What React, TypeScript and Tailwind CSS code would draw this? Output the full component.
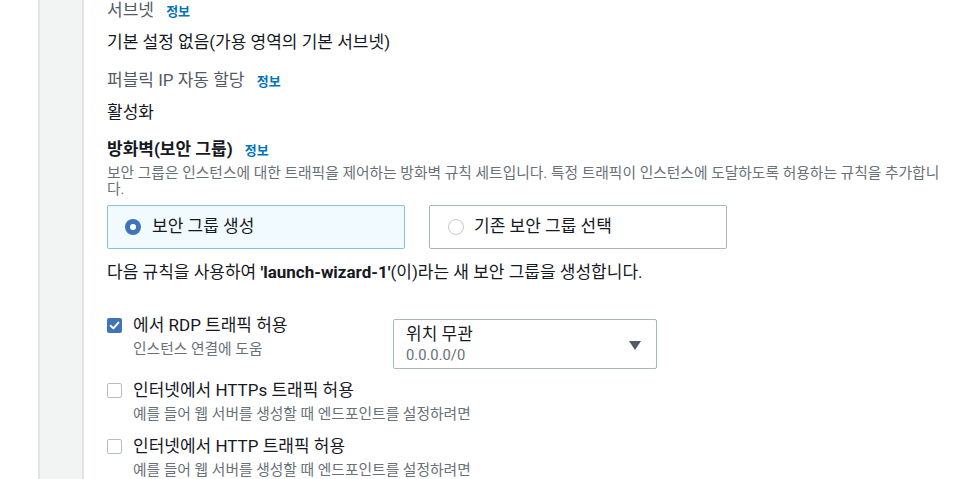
import React from 'react';

const Info = () => (
  <span className="ml-2 text-[13px] font-bold text-[#0073bb]">정보</span>
);

const CheckBox = ({ checked }: { checked?: boolean }) =>
  checked ? (
    <span className="mt-[3px] flex h-[15px] w-[15px] shrink-0 items-center justify-center rounded-[2px] bg-[#3f75b8]">
      <svg width="11" height="11" viewBox="0 0 10 10">
        <path d="M1.5 5.2 L4 7.6 L8.6 2.4" fill="none" stroke="white" strokeWidth="1.8" strokeLinecap="round" strokeLinejoin="round" />
      </svg>
    </span>
  ) : (
    <span className="mt-[3px] h-[15px] w-[15px] shrink-0 rounded-[2px] border border-[#b6bec0] bg-white" />
  );

const Rule = ({ checked, title, sub }: { checked?: boolean; title: React.ReactNode; sub: string }) => (
  <div className="flex gap-[11px]">
    <CheckBox checked={checked} />
    <div>
      <div className="text-[17px] leading-[20px] text-[#16191f]">{title}</div>
      <div className="mt-[6px] text-[14.75px] leading-[16px] text-[#687078]">{sub}</div>
    </div>
  </div>
);

const Radio = ({ on }: { on: boolean }) =>
  on ? (
    <span className="flex h-[16px] w-[16px] shrink-0 items-center justify-center rounded-full bg-[#3f75b8]">
      <span className="h-[6px] w-[6px] rounded-full bg-white" />
    </span>
  ) : (
    <span className="h-[16px] w-[16px] shrink-0 rounded-full border border-[#c4cacb] bg-white" />
  );

const App = () => {
  const [mode, setMode] = React.useState<'new' | 'existing'>('new');

  return (
    <div className="flex h-[479px] w-[966px] overflow-hidden bg-white font-['Roboto','Noto_Sans_CJK_KR',sans-serif]">
      <div className="w-[38px] shrink-0 bg-white" />
      <div className="w-[46px] shrink-0 border-x-2 border-[#e2e5e5] bg-[#f2f3f3]" />

      <div className="w-[882px] pl-[23px]">
        <div className="text-[17px] leading-[20px] text-[#545b64]">
          서브넷 <Info />
        </div>
        <div className="mt-[10px] text-[17px] leading-[20px] text-[#16191f]">기본 설정 없음(가용 영역의 기본 서브넷)</div>

        <div className="mt-[18px] text-[17px] leading-[20px] text-[#545b64]">
          퍼블릭 IP 자동 할당 <Info />
        </div>
        <div className="mt-[10px] text-[17px] leading-[20px] text-[#16191f]">활성화</div>

        <div className="mt-[17px] text-[17px] font-bold leading-[20px] text-[#16191f]">
          방화벽(보안 그룹) <Info />
        </div>
        <p className="mt-[4px] w-[842px] text-[14.75px] leading-[16px] text-[#687078]">
          보안 그룹은 인스턴스에 대한 트래픽을 제어하는 방화벽 규칙 세트입니다. 특정 트래픽이 인스턴스에 도달하도록 허용하는 규칙을 추가합니다.
        </p>

        <div className="mt-[8px] flex gap-[24px]">
          <button
            onClick={() => setMode('new')}
            className={`flex h-[44px] w-[298px] items-center gap-[11px] rounded-[2px] border pl-[17px] text-left ${mode === 'new' ? 'border-[#7fc1e3] bg-[#f1faff]' : 'border-[#aab7b8] bg-white'}`}
          >
            <Radio on={mode === 'new'} />
            <span className="text-[17px] text-[#16191f]">보안 그룹 생성</span>
          </button>
          <button
            onClick={() => setMode('existing')}
            className={`flex h-[44px] w-[298px] items-center gap-[10px] rounded-[2px] border pl-[18px] text-left ${mode === 'existing' ? 'border-[#7fc1e3] bg-[#f1faff]' : 'border-[#aab7b8] bg-white'}`}
          >
            <Radio on={mode === 'existing'} />
            <span className="text-[17px] text-[#16191f]">기존 보안 그룹 선택</span>
          </button>
        </div>

        <div className="mt-[13px] text-[17px] leading-[20px] text-[#16191f]">
          다음 규칙을 사용하여 <b>'launch-wizard-1'</b>(이)라는 새 보안 그룹을 생성합니다.
        </div>

        <div className="mt-[33px] flex items-start">
          <div className="w-[286px]">
            <Rule checked title="에서 RDP 트래픽 허용" sub="인스턴스 연결에 도움" />
          </div>
          <div className="mt-[4px] flex h-[50px] w-[264px] items-start justify-between rounded-[2px] border border-[#aab7b8] pl-[12px] pr-[15px] pt-[4px]">
            <div>
              <div className="text-[17px] leading-[20px] text-[#16191f]">위치 무관</div>
              <div className="text-[14.75px] leading-[22px] text-[#687078]">0.0.0.0/0</div>
            </div>
            <svg className="mt-[17px]" width="12" height="9" viewBox="0 0 12 9">
              <path d="M0 0 H12 L6 9 Z" fill="#545b64" />
            </svg>
          </div>
        </div>

        <div className="mt-[11px]">
          <Rule title="인터넷에서 HTTPs 트래픽 허용" sub="예를 들어 웹 서버를 생성할 때 엔드포인트를 설정하려면" />
        </div>
        <div className="mt-[14px]">
          <Rule title="인터넷에서 HTTP 트래픽 허용" sub="예를 들어 웹 서버를 생성할 때 엔드포인트를 설정하려면" />
        </div>
      </div>
    </div>
  );
};

export default App;
